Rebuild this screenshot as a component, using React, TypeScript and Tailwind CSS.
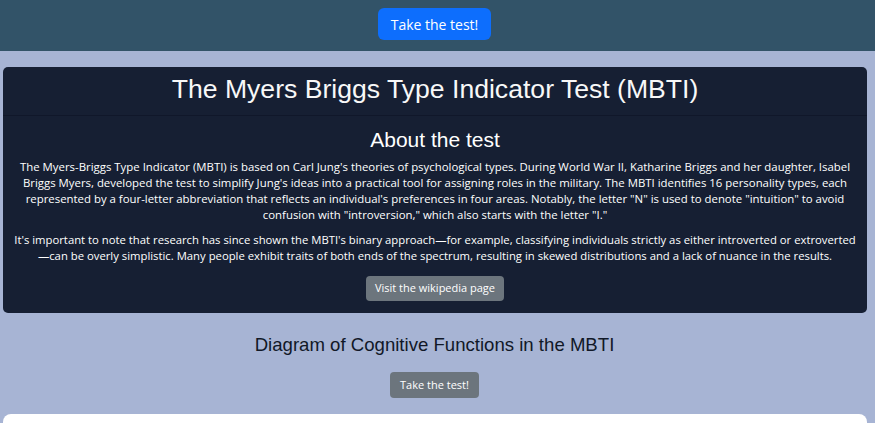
import React from "react";

const body = { fontFamily: '"Open Sans", "DejaVu Sans", sans-serif' };
const head = { fontFamily: '"Liberation Sans", Arial, sans-serif' };

export default function App() {
  return (
    <div className="min-h-[423px] bg-[#a7b4d4] overflow-hidden" style={body}>
      <div className="h-[51px] bg-[#325368] flex justify-center pt-[8px] pr-[6px]">
        <button className="h-[32px] w-[113px] rounded-[6px] bg-[#0d6efd] text-white text-[14px]">
          Take the test!
        </button>
      </div>
      <div className="ml-[3px] mr-[8px] mt-[16px] rounded-[5px] bg-[#161f33] text-white">
        <div className="h-[49px] border-b border-[#10172a] flex items-center justify-center pb-[3px]">
          <h1 className="text-[26.6px] leading-none text-[#f8f8f8]" style={head}>
            The Myers Briggs Type Indicator Test (MBTI)
          </h1>
        </div>
        <div className="px-[4px] pt-[11px] pb-[12px] text-center">
          <h2 className="text-[21px] leading-[26px] mb-[6px]" style={head}>About the test</h2>
          <p className="text-[11.4px] leading-[16px]">
            The Myers-Briggs Type Indicator (MBTI) is based on Carl Jung's theories of psychological types. During World War II, Katharine Briggs and her daughter, Isabel Briggs Myers, developed the test to simplify Jung's ideas into a practical tool for assigning roles in the military. The MBTI identifies 16 personality types, each represented by a four-letter abbreviation that reflects an individual's preferences in four areas. Notably, the letter "N" is used to denote "intuition" to avoid confusion with "introversion," which also starts with the letter "I."
          </p>
          <p className="text-[11.3px] leading-[16px] mt-[9px]">
            It's important to note that research has since shown the MBTI's binary approach—for example, classifying individuals strictly as either introverted or extroverted
            <br />
            —can be overly simplistic. Many people exhibit traits of both ends of the spectrum, resulting in skewed distributions and a lack of nuance in the results.
          </p>
          <button className="mt-[12px] h-[25px] px-[9px] rounded-[4px] bg-[#6c757d] text-[11px] text-white">
            Visit the wikipedia page
          </button>
        </div>
      </div>
      <div className="flex flex-col items-center pr-[6px]">
        <h2 className="mt-[20px] text-[18.6px] leading-[24px] text-[#111827]" style={head}>
          Diagram of Cognitive Functions in the MBTI
        </h2>
        <button className="mt-[15px] h-[26px] w-[89px] rounded-[4px] bg-[#6c757d] text-[11px] text-white">
          Take the test!
        </button>
      </div>
      <div className="ml-[3px] mr-[8px] mt-[16px] h-[40px] rounded-[8px] bg-white" />
    </div>
  );
}
